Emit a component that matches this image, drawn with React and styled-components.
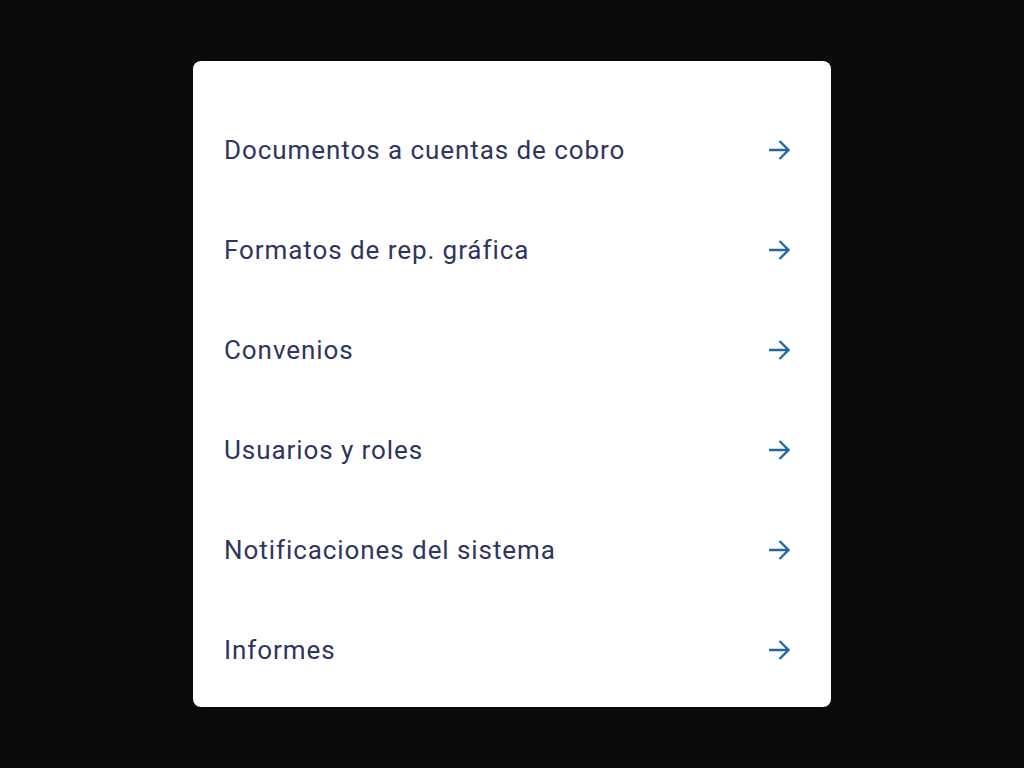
import React from "react";
import styled, { createGlobalStyle } from "styled-components";

const GlobalStyle = createGlobalStyle`
  html, body {
    margin: 0;
    padding: 0;
    background: #0b0b0c;
  }
  body {
    font-family: Roboto, "Noto Sans", "Liberation Sans", sans-serif;
  }
`;

const Page = styled.div`
  min-height: 768px;
  display: flex;
  justify-content: center;
  align-items: flex-start;
  padding-top: 61px;
  box-sizing: border-box;
`;

const Card = styled.div`
  width: 638px;
  background: #ffffff;
  border-radius: 8px;
  padding: 39px 0 7px;
  box-sizing: border-box;
`;

const Menu = styled.ul`
  list-style: none;
  margin: 0;
  padding: 0;
`;

const Item = styled.li`
  height: 100px;
  display: flex;
  align-items: center;
  justify-content: space-between;
  padding: 0 41px 0 31px;
  cursor: pointer;
`;

const Label = styled.span`
  font-size: 26px;
  font-weight: 400;
  color: #2e3560;
  letter-spacing: 0.93px;
`;

const Arrow = () => (
  <svg width="22" height="22" viewBox="0 0 22 22" fill="none">
    <path
      d="M1 11H20.5M11.5 2L20.5 11L11.5 20"
      stroke="#2466a6"
      strokeWidth="2.3"
      strokeLinejoin="miter"
    />
  </svg>
);

const items = [
  "Documentos a cuentas de cobro",
  "Formatos de rep. gráfica",
  "Convenios",
  "Usuarios y roles",
  "Notificaciones del sistema",
  "Informes",
];

export default function App() {
  return (
    <>
      <GlobalStyle />
      <Page>
        <Card>
          <Menu>
            {items.map((label) => (
              <Item key={label}>
                <Label>{label}</Label>
                <Arrow />
              </Item>
            ))}
          </Menu>
        </Card>
      </Page>
    </>
  );
}
